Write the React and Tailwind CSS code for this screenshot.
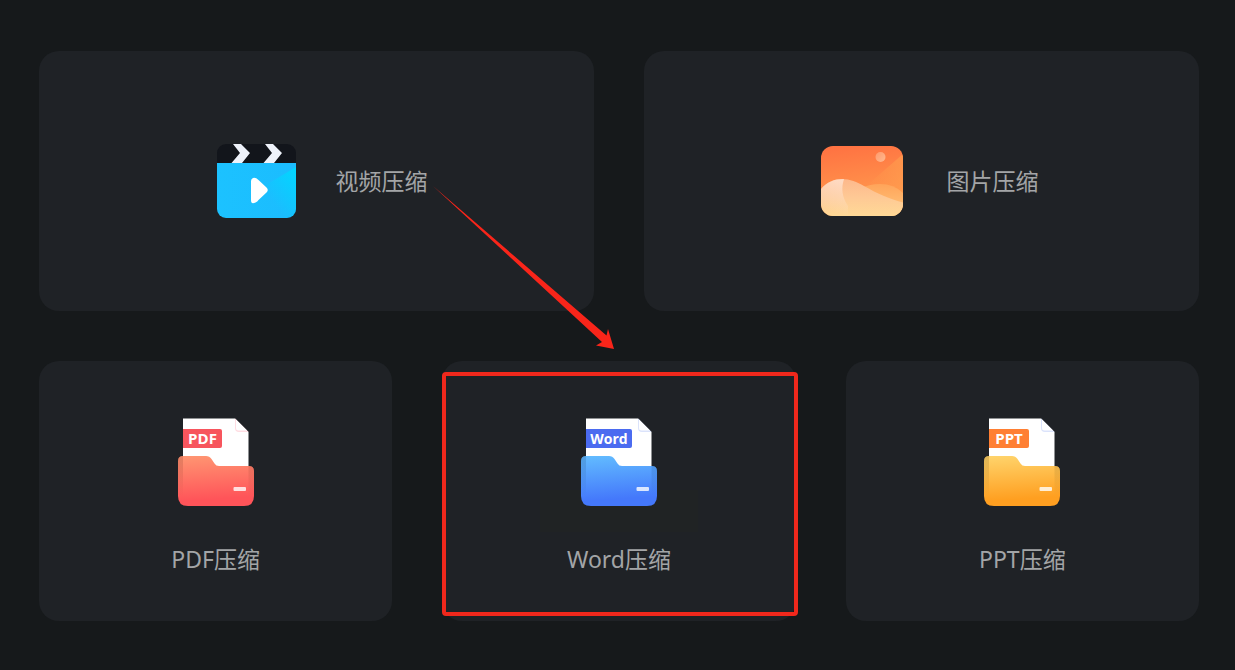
import React from "react";

const FONT = "font-['Noto_Sans','Noto_Sans_CJK_SC',sans-serif]";

function VideoIcon() {
  return (
    <svg width="100" height="76" viewBox="0 0 100 76" aria-hidden="true">
      <defs>
        <linearGradient id="video-body" x1="0" y1="0" x2="1" y2="0">
          <stop offset="0" stopColor="#1cc2ff" />
          <stop offset="1" stopColor="#1bbcfe" />
        </linearGradient>
        <linearGradient
          id="video-shine"
          gradientUnits="userSpaceOnUse"
          x1="92"
          y1="26"
          x2="60"
          y2="50"
        >
          <stop offset="0" stopColor="#00d8ff" />
          <stop offset="1" stopColor="#00d8ff" stopOpacity="0" />
        </linearGradient>
        <clipPath id="video-clip">
          <rect x="11" y="1" width="79" height="74" rx="9" />
        </clipPath>
      </defs>
      <g clipPath="url(#video-clip)">
        <rect x="11" y="1" width="79" height="20" fill="#12151b" />
        <path
          d="M27 1h8l9 9-8 10H25.500L34 10zM59 1h8l9 9-8 10H57.500L66 10z"
          fill="#eef2fa"
        />
        <rect x="11" y="20" width="79" height="55" fill="url(#video-body)" />
        <path d="M90 24v51H50V48z" fill="url(#video-shine)" />
      </g>
      <path
        d="M45 38v19q0 5 4.500 2.500 2-1 3-2.500l8-7.500q2.500-2.500 0-5l-8-7.500q-3-3-5.500-2-2 .8-2 3z"
        fill="#fff"
      />
    </svg>
  );
}

function ImageIcon() {
  return (
    <svg width="112" height="72" viewBox="0 0 112 72" aria-hidden="true">
      <defs>
        <linearGradient id="image-sky" x1="0.35" y1="0" x2="0.5" y2="1">
          <stop offset="0" stopColor="#ff7342" />
          <stop offset="1" stopColor="#ffa350" />
        </linearGradient>
        <linearGradient
          id="image-hill"
          gradientUnits="userSpaceOnUse"
          x1="50"
          y1="34"
          x2="50"
          y2="71"
        >
          <stop offset="0" stopColor="#fdb88c" />
          <stop offset="0.5" stopColor="#fec995" />
          <stop offset="1" stopColor="#ffd996" />
        </linearGradient>
        <linearGradient id="image-back" x1="0" y1="0" x2="0" y2="1">
          <stop offset="0" stopColor="#ffa45a" />
          <stop offset="1" stopColor="#ffc97e" />
        </linearGradient>
        <linearGradient
          id="image-glow"
          gradientUnits="userSpaceOnUse"
          x1="38"
          y1="36"
          x2="30"
          y2="68"
        >
          <stop offset="0" stopColor="#ffe6d6" stopOpacity="0.75" />
          <stop offset="1" stopColor="#ffe6d6" stopOpacity="0" />
        </linearGradient>
        <linearGradient id="image-sheen" x1="1" y1="0" x2="0.2" y2="0.8">
          <stop offset="0" stopColor="#ffab52" stopOpacity="0.5" />
          <stop offset="1" stopColor="#ffab52" stopOpacity="0" />
        </linearGradient>
        <linearGradient id="image-moon" x1="0" y1="0" x2="1" y2="1">
          <stop offset="0" stopColor="#ff9a6c" />
          <stop offset="1" stopColor="#ffb98f" />
        </linearGradient>
        <clipPath id="image-clip">
          <rect x="16" y="1" width="82" height="70" rx="12" />
        </clipPath>
      </defs>
      <g clipPath="url(#image-clip)">
        <rect x="16" y="1" width="82" height="70" fill="url(#image-sky)" />
        <path d="M98 9 60 42l38 14z" fill="url(#image-sheen)" />
        <circle cx="75.500" cy="12" r="5" fill="url(#image-moon)" />
        <path d="M54 44q10-5 21-5 14 0 23 9v23H54z" fill="url(#image-back)" />
        <path
          d="M16 44c6-7 13-10 21-10 8 0 15 3 22 7 7 4 13 7 20 10 7 3 13 5 19 6.500V71H16z"
          fill="url(#image-hill)"
        />
        <path d="M16 44c6-7 13-10 23-10-3 9-2 18 4 27v10H16z" fill="url(#image-glow)" />
      </g>
    </svg>
  );
}

function FolderIcon({ id, label, badgeWidth, badgeText, badge, top, bottom, fold, behind }) {
  return (
    <svg className="relative" width="76" height="90" viewBox="0 0 76 90" aria-hidden="true">
      <defs>
        <linearGradient id={`${id}-folder`} x1="0" y1="0" x2="0.1" y2="1">
          <stop offset="0" stopColor={top} />
          <stop offset="0.9" stopColor={bottom} />
        </linearGradient>
        <linearGradient id={`${id}-edge`} x1="0" y1="0" x2="0" y2="1">
          <stop offset="0" stopColor={behind} stopOpacity="0.25" />
          <stop offset="1" stopColor={behind} stopOpacity="0" />
        </linearGradient>
      </defs>
      <path d="M5 1.500H57L70.500 15v60H5z" fill="#fff" />
      <path d="M57 1.500V11q0 4 4 4h9.500z" fill={fold} />
      <path d="M58 2.500v8.500q0 2.500 2.500 2.500h8.500z" fill="#fff" />
      <path d={`M5 12h${badgeWidth - 2}q2 0 2 2v15q0 2-2 2H5z`} fill={badge} />
      <text
        x={5 + badgeWidth / 2}
        y="27"
        textAnchor="middle"
        fill="#fff"
        className={`font-['Open_Sans',sans-serif] font-bold ${badgeText}`}
      >
        {label}
      </text>
      <path
        d="M5 39h23q3.500 0 5.500 3l3 4.500q1.500 2.500 4.500 2.500h30q5 0 5 5v25q0 10-10 10H10Q0 89 0 79V44q0-5 5-5z"
        fill={`url(#${id}-folder)`}
      />
      <path
        d="M5 39v40H0V44q0-5 5-5zM70.500 49q5.500 0 5.500 5v25h-5.500z"
        fill={`url(#${id}-edge)`}
      />
      <rect x="55.500" y="70" width="12.500" height="4" rx="1" fill="#fff" opacity="0.8" />
    </svg>
  );
}

const documents = [
  {
    id: "pdf",
    label: "PDF",
    badgeWidth: 39,
    badgeText: "text-[15px]",
    badge: "#f7555d",
    top: "#ff9672",
    bottom: "#ff5459",
    fold: "#ffdce2",
    behind: "#8a3a2a",
  },
  {
    id: "word",
    label: "Word",
    badgeWidth: 46,
    badgeText: "text-[14px]",
    badge: "#4b6bf0",
    top: "#62bcff",
    bottom: "#4478fb",
    fold: "#dbe3fb",
    behind: "#1d4a80",
  },
  {
    id: "ppt",
    label: "PPT",
    badgeWidth: 40,
    badgeText: "text-[15px]",
    badge: "#ff7f33",
    top: "#ffd46c",
    bottom: "#ff9f20",
    fold: "#dbe3fb",
    behind: "#80601d",
  },
];

function Highlight() {
  return (
    <>
      <div className="pointer-events-none absolute -right-0.5 left-0 top-[11px] bottom-[5px] rounded border-4 border-[#f0281c]" />
      <svg
        className="pointer-events-none absolute -left-2.5 -top-44"
        width="184"
        height="166"
        viewBox="0 0 184 166"
        aria-hidden="true"
      >
        <path d="M1 1 174.500 150.500l1.500-6.500L182 164l-18-3.500 6-3.500z" fill="#f9251a" />
      </svg>
    </>
  );
}

export default function App() {
  return (
    <main
      className={`${FONT} flex min-h-screen flex-col gap-[50px] bg-[#16191b] pt-[51px] pr-9 pb-12 pl-[39px] text-[23px] leading-8 text-[#a3a5a7]`}
    >
      <section className="grid grid-cols-2 gap-[50px]">
        <button
          type="button"
          className="flex h-[260px] items-center justify-center gap-[30px] rounded-[20px] bg-[#1f2226]"
        >
          <VideoIcon />
          <span>视频压缩</span>
        </button>
        <button
          type="button"
          className="flex h-[260px] items-center justify-center gap-[30px] rounded-[20px] bg-[#1f2226]"
        >
          <ImageIcon />
          <span>图片压缩</span>
        </button>
      </section>

      <section className="grid grid-cols-3 gap-[50px]">
        {documents.map((doc) => (
          <div key={doc.id} className="relative">
            <button
              type="button"
              className="relative flex h-[260px] w-full flex-col items-center justify-start gap-9 rounded-[20px] bg-[#1f2226] pt-14"
            >
              {doc.id === "word" && (
                <span className="absolute top-[129px] h-[42px] w-[158px] bg-[#202324]" />
              )}
              <FolderIcon {...doc} />
              <span>{doc.label}压缩</span>
            </button>
            {doc.id === "word" && <Highlight />}
          </div>
        ))}
      </section>
    </main>
  );
}
